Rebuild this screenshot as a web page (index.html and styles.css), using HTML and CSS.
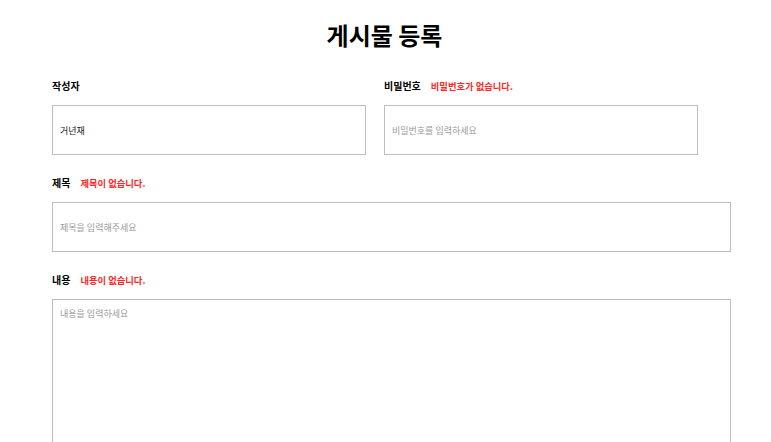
FILE: index.html
```html
<!DOCTYPE html>
<html>
	<head>
		<meta charset="UTF-8">
		<title>게시물 등록</title>
		<link rel="stylesheet" href="styles.css">
	</head>
	<body>
		<div class="wrap">
			<h1 class="title">게시물 등록</h1>
			<div class="row">
				<div class="field">
					<div class="label">작성자</div>
					<input class="input" type="text" value="거년재">
				</div>
				<div class="field">
					<div class="label">비밀번호<span class="err">비밀번호가 없습니다.</span></div>
					<input class="input" type="password" placeholder="비밀번호를 입력하세요">
				</div>
			</div>
			<div class="field">
				<div class="label">제목<span class="err">제목이 없습니다.</span></div>
				<input class="input" type="text" placeholder="제목을 입력해주세요">
			</div>
			<div class="field">
				<div class="label">내용<span class="err">내용이 없습니다.</span></div>
				<textarea class="input area" placeholder="내용을 입력하세요"></textarea>
			</div>
		</div>
	</body>
</html>
```

FILE: styles.css
```css
*{
	margin: 0;
	padding: 0;
	box-sizing: border-box;
}
body{
	font-family: "Noto Sans CJK KR", "Noto Sans", sans-serif;
	color: #000;
	background: #fff;
}
.wrap{
	width: 679px;
	margin-left: 52px;
	padding-top: 17px;
}
.title{
	font-size: 24px;
	line-height: 36px;
	font-weight: 700;
	text-align: center;
	margin-left: -14px;
	margin-bottom: 25px;
}
.row{
	display: flex;
	gap: 18px;
	width: 646px;
}
.row .field{
	flex: 1;
}
.field{
	margin-bottom: 20px;
}
.label{
	height: 16px;
	font-size: 10px;
	font-weight: 700;
	line-height: 16px;
	margin-bottom: 11px;
}
.err{
	color: #ff2626;
	font-size: 9.3px;
	margin-left: 10px;
}
.input{
	display: block;
	width: 100%;
	height: 50px;
	border: 1px solid #bdbdbd;
	padding: 0 7px;
	font-family: "Noto Sans CJK KR", "Noto Sans", sans-serif;
	font-size: 9px;
	color: #222;
	outline: none;
}
.input::placeholder{
	color: #999;
}
.area{
	height: 300px;
	padding: 7px 7px;
	resize: none;
}
```
